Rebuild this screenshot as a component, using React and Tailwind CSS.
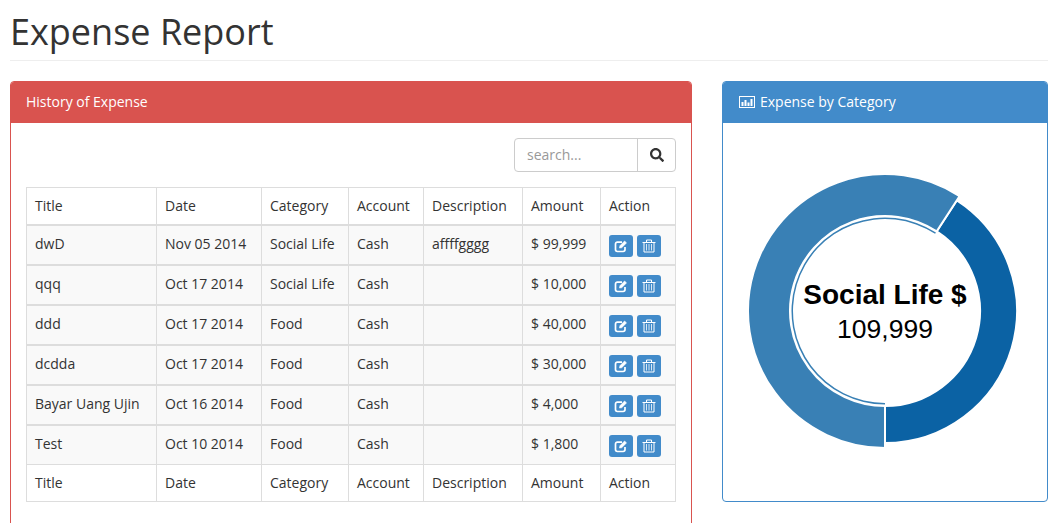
import { FaSearch } from 'react-icons/fa';

const COLUMNS = [
  { name: 'Title', width: 'w-[130px]' },
  { name: 'Date', width: 'w-[105px]' },
  { name: 'Category', width: 'w-[87px]' },
  { name: 'Account', width: 'w-[75px]' },
  { name: 'Description', width: 'w-[99px]' },
  { name: 'Amount', width: 'w-[78px]' },
  { name: 'Action', width: 'w-[75px]' },
];

const ROWS = [
  ['dwD', 'Nov 05 2014', 'Social Life', 'Cash', 'affffgggg', '$ 99,999'],
  ['qqq', 'Oct 17 2014', 'Social Life', 'Cash', '', '$ 10,000'],
  ['ddd', 'Oct 17 2014', 'Food', 'Cash', '', '$ 40,000'],
  ['dcdda', 'Oct 17 2014', 'Food', 'Cash', '', '$ 30,000'],
  ['Bayar Uang Ujin', 'Oct 16 2014', 'Food', 'Cash', '', '$ 4,000'],
  ['Test', 'Oct 10 2014', 'Food', 'Cash', '', '$ 1,800'],
];

// arc helper, angles in degrees clockwise from 12 o'clock
function arcPath(cx, cy, inner, outer, from, to) {
  const pt = (r, a) => {
    const rad = (a * Math.PI) / 180;
    return `${(cx + r * Math.sin(rad)).toFixed(2)} ${(cy - r * Math.cos(rad)).toFixed(2)}`;
  };
  const large = to - from > 180 ? 1 : 0;
  return `M${pt(outer, from)} A${outer} ${outer} 0 ${large} 1 ${pt(outer, to)} L${pt(inner, to)} A${inner} ${inner} 0 ${large} 0 ${pt(inner, from)} Z`;
}

function Donut() {
  const cx = 162;
  const cy = 188;
  return (
    <svg width="324" height="378" className="block">
      <path d={arcPath(cx, cy, 95, 132, 33, 180)} fill="#0b62a4" stroke="#ffffff" strokeWidth="2" />
      <path d={arcPath(cx, cy, 95, 137, 180, 393)} fill="#3980b5" stroke="#ffffff" strokeWidth="2" />
      <path d={arcPath(cx, cy, 92, 93.5, 180, 393)} fill="#3980b5" />
      <text x={cx} y={cy - 7} textAnchor="middle" fontFamily="'Liberation Sans', Arial, sans-serif" fontWeight="700" fontSize="28" fill="#000000">
        Social Life $
      </text>
      <text x={cx} y={cy + 27} textAnchor="middle" fontFamily="'Liberation Sans', Arial, sans-serif" fontSize="26.5" fill="#000000">
        109,999
      </text>
    </svg>
  );
}

function ChartIcon() {
  return (
    <svg width="16" height="12" viewBox="0 0 16 12" className="block" fill="#ffffff">
      <path d="M0 0h16v12H0zM1 1v10h14V1z" fillRule="evenodd" />
      <rect x="2.5" y="6" width="2" height="4" />
      <rect x="5.5" y="4" width="2" height="6" />
      <rect x="8.5" y="6.5" width="2" height="3.5" />
      <rect x="11.5" y="3" width="2" height="7" />
    </svg>
  );
}

function EditIcon() {
  return (
    <svg width="14" height="14" viewBox="0 0 14 14" fill="none" stroke="#ffffff">
      <path d="M11 8v2.6a1.9 1.9 0 0 1-1.9 1.9H3.4a1.9 1.9 0 0 1-1.9-1.9V5a1.9 1.9 0 0 1 1.9-1.9H8" strokeWidth="1.7" />
      <path d="M5.5 9l.4-2.2L10.6 2l1.9 1.9-4.8 4.8z" fill="#ffffff" strokeWidth="0.6" />
    </svg>
  );
}

function TrashIcon() {
  return (
    <svg width="14" height="14" viewBox="0 0 14 14" fill="none" stroke="#ffffff">
      <path d="M0.5 3.5h13" strokeWidth="1" />
      <path d="M4.5 3V1h5v2" strokeWidth="1" />
      <path d="M2 3.5v9.5h10V3.5" strokeWidth="1" />
      <path d="M4.5 5v6.5M7 5v6.5M9.5 5v6.5" strokeWidth="0.8" />
    </svg>
  );
}

function ActionButton({ children }) {
  return (
    <button className="flex h-[22px] w-[24px] items-center justify-center rounded-[3px] bg-[#428bca] text-white">
      {children}
    </button>
  );
}

export default function App() {
  return (
    <div className="h-[523px] overflow-hidden bg-white pl-[10px] pr-[14px] font-['Open_Sans',sans-serif] text-[14px] leading-[20px] text-[#333333]">
      {/* Page header */}
      <div className="mb-[20px] h-[61px] border-b border-[#eeeeee] pt-[12px]">
        <h1 className="text-[36px] leading-[40px] font-normal">Expense Report</h1>
      </div>

      <div className="flex items-start gap-[30px]">
        {/* History panel */}
        <div className="w-[682px] shrink-0 overflow-hidden rounded-[4px] border border-[#d9534f] bg-white">
          <div className="flex h-[41px] items-center bg-[#d9534f] px-[15px] pb-[2px] text-white">History of Expense</div>
          <div className="p-[15px]">
            <div className="mb-[15px] flex justify-end">
              <div className="flex h-[34px] w-[162px] rounded-[4px] border border-[#cccccc]">
                <input
                  placeholder="search..."
                  className="w-[123px] border-r border-[#cccccc] px-[12px] text-[14px] text-[#555555] outline-none placeholder:text-[#999999]"
                />
                <div className="flex flex-1 items-center justify-center text-[14px] text-[#333333]">
                  <FaSearch />
                </div>
              </div>
            </div>

            <table className="w-[649px] table-fixed border-collapse border border-[#dddddd]">
              <thead>
                <tr className="h-[37px]">
                  {COLUMNS.map((col) => (
                    <th key={col.name} className={`${col.width} border border-b-2 border-[#dddddd] px-[8px] text-left font-normal`}>
                      {col.name}
                    </th>
                  ))}
                </tr>
              </thead>
              <tbody>
                {ROWS.map((row, rowIndex) => (
                  <tr key={row[0]} className="h-[40px] bg-[#f9f9f9]">
                    {row.map((cell, i) => (
                      <td
                        key={i}
                        className={`border ${rowIndex < ROWS.length - 1 ? 'border-b-2' : ''} border-[#dddddd] px-[8px] pt-[8px] pb-0 align-top whitespace-nowrap`}
                      >
                        {cell}
                      </td>
                    ))}
                    <td className={`border ${rowIndex < ROWS.length - 1 ? 'border-b-2' : ''} border-[#dddddd] px-[8px] pt-[9px] pb-0 align-top`}>
                      <div className="flex gap-[4px]">
                        <ActionButton>
                          <EditIcon />
                        </ActionButton>
                        <ActionButton>
                          <TrashIcon />
                        </ActionButton>
                      </div>
                    </td>
                  </tr>
                ))}
              </tbody>
              <tfoot>
                <tr className="h-[37px]">
                  {COLUMNS.map((col) => (
                    <th key={col.name} className="border border-[#dddddd] px-[8px] text-left font-normal">
                      {col.name}
                    </th>
                  ))}
                </tr>
              </tfoot>
            </table>
            <div className="h-[20px]" />
          </div>
        </div>

        {/* Category panel */}
        <div className="w-[326px] shrink-0 overflow-hidden rounded-[4px] border border-[#428bca] bg-white">
          <div className="flex h-[41px] items-center gap-[5px] bg-[#428bca] px-[16px] pb-[2px] text-white">
            <ChartIcon />
            <span>Expense by Category</span>
          </div>
          <Donut />
        </div>
      </div>
    </div>
  );
}
